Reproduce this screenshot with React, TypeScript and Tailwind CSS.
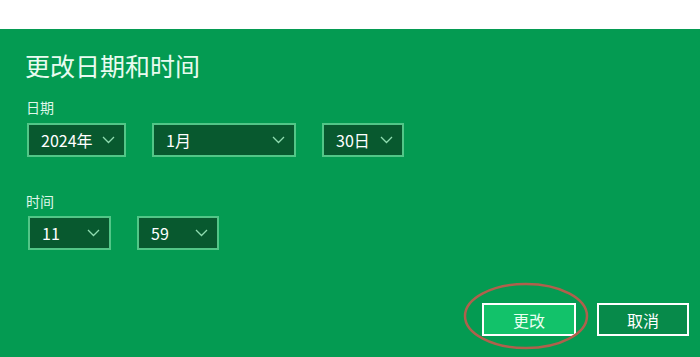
import React from "react";

const font = { fontFamily: '"Noto Sans CJK SC", "Noto Sans", sans-serif' };

function Chevron() {
  return (
    <svg width="13" height="8" viewBox="0 0 13 8" className="shrink-0">
      <path d="M1 1 L6.5 6.5 L12 1" fill="none" stroke="#8fdcb0" strokeWidth="1.3" />
    </svg>
  );
}

function Select({ label, w }: { label: string; w: string }) {
  return (
    <div
      className={`${w} h-[34px] border-2 border-[#52c687] bg-[#08592f] flex items-center justify-between pl-[12px] pr-[9px] text-white text-[16px]`}
    >
      <span>{label}</span>
      <Chevron />
    </div>
  );
}

export default function App() {
  return (
    <div className="w-[700px] h-[357px] overflow-hidden flex flex-col bg-white relative" style={font}>
      <div className="h-[29px] bg-white shrink-0" />
      <div className="flex-1 bg-[#049b52] flex flex-col pl-[25px] pt-[19px] text-white">
        <div className="text-[25px] leading-[34px] text-[#e9fbf0]">更改日期和时间</div>
        <div className="text-[14px] leading-[20px] mt-[15px] pl-[1px] text-[#dff7e9]">日期</div>
        <div className="flex gap-[26px] mt-[6px] pl-[2px]">
          <Select label="2024年" w="w-[99px]" />
          <Select label="1月" w="w-[144px]" />
          <Select label="30日" w="w-[82px]" />
        </div>
        <div className="text-[14px] leading-[20px] mt-[34px] pl-[1px] text-[#dff7e9]">时间</div>
        <div className="flex gap-[26px] mt-[5px] pl-[3px]">
          <Select label="11" w="w-[83px]" />
          <Select label="59" w="w-[82px]" />
        </div>
        <div className="flex-1" />
        <div className="flex justify-end gap-[21px] pr-[11px] pb-[21px]">
          <button className="w-[94px] h-[33px] border-2 border-white bg-[#12c26a] text-[#e8fff1] text-[16px]">
            更改
          </button>
          <button className="w-[92px] h-[33px] border-2 border-white bg-[#078a4a] text-white text-[16px]">
            取消
          </button>
        </div>
      </div>
      <svg className="absolute left-0 top-0 pointer-events-none" width="700" height="357">
        <ellipse cx="526" cy="316" rx="61" ry="32" fill="none" stroke="#b0604c" strokeWidth="2.5" />
      </svg>
    </div>
  );
}
